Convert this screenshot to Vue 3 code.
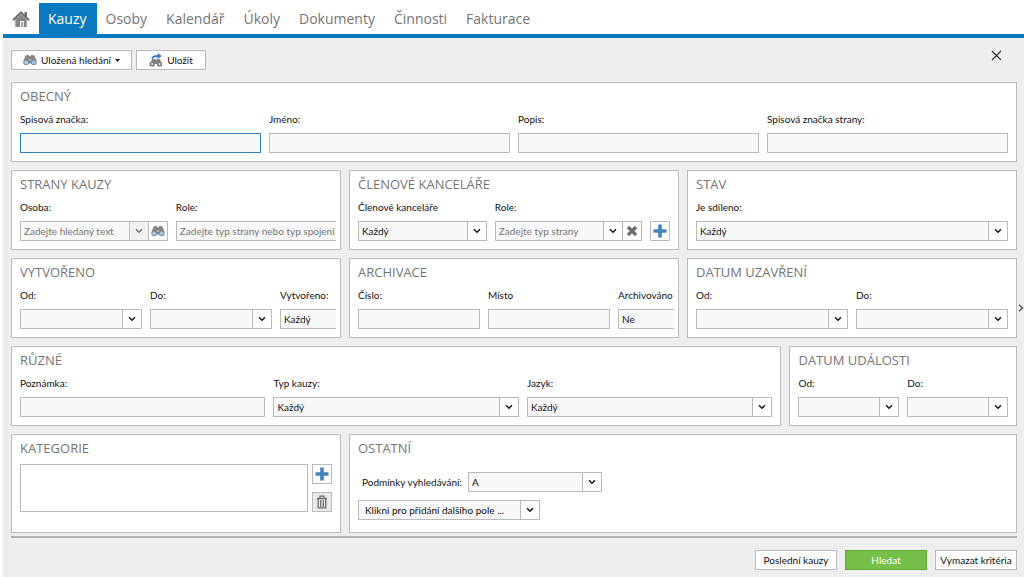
<script setup>
import { ref } from 'vue'

const tabs = ['Kauzy', 'Osoby', 'Kalendář', 'Úkoly', 'Dokumenty', 'Činnosti', 'Fakturace']
const activeTab = ref('Kauzy')

const groups = [
  {
    title: 'Obecný', area: 'general', layout: 'cols-4',
    fields: [
      { id: 'mark', label: 'Spisová značka:', kind: 'text', focused: true },
      { id: 'name', label: 'Jméno:', kind: 'text' },
      { id: 'desc', label: 'Popis:', kind: 'text' },
      { id: 'party-mark', label: 'Spisová značka strany:', kind: 'text' }
    ]
  },
  {
    title: 'Strany kauzy', area: 'parties', layout: 'cols-party',
    fields: [
      { id: 'person', label: 'Osoba:', kind: 'combo', hint: 'Zadejte hledaný text', muted: true, extra: 'find' },
      { id: 'party-role', label: 'Role:', kind: 'text', hint: 'Zadejte typ strany nebo typ spojení', cut: true }
    ]
  },
  {
    title: 'Členové kanceláře', area: 'members', layout: 'cols-member',
    fields: [
      { id: 'member', label: 'Členové kanceláře', kind: 'select', value: 'Každý' },
      { id: 'member-role', label: 'Role:', kind: 'combo', hint: 'Zadejte typ strany', extra: 'clear' }
    ],
    add: true
  },
  {
    title: 'Stav', area: 'state', layout: 'cols-1',
    fields: [{ id: 'shared', label: 'Je sdíleno:', kind: 'select', value: 'Každý' }]
  },
  {
    title: 'Vytvořeno', area: 'created', layout: 'cols-cut',
    fields: [
      { id: 'created-from', label: 'Od:', kind: 'combo' },
      { id: 'created-to', label: 'Do:', kind: 'combo' },
      { id: 'created-by', label: 'Vytvořeno:', kind: 'select', value: 'Každý', cut: true }
    ]
  },
  {
    title: 'Archivace', area: 'archive', layout: 'cols-cut',
    fields: [
      { id: 'number', label: 'Číslo:', kind: 'text' },
      { id: 'place', label: 'Místo', kind: 'text' },
      { id: 'archived', label: 'Archivováno', kind: 'select', value: 'Ne', cut: true }
    ]
  },
  {
    title: 'Datum uzavření', area: 'closed', layout: 'cols-2',
    fields: [
      { id: 'closed-from', label: 'Od:', kind: 'combo' },
      { id: 'closed-to', label: 'Do:', kind: 'combo' }
    ]
  },
  {
    title: 'Různé', area: 'misc', layout: 'cols-3',
    fields: [
      { id: 'note', label: 'Poznámka:', kind: 'text' },
      { id: 'type', label: 'Typ kauzy:', kind: 'select', value: 'Každý' },
      { id: 'lang', label: 'Jazyk:', kind: 'select', value: 'Každý' }
    ]
  },
  {
    title: 'Datum události', area: 'event', layout: 'cols-2',
    fields: [
      { id: 'event-from', label: 'Od:', kind: 'combo' },
      { id: 'event-to', label: 'Do:', kind: 'combo' }
    ]
  }
]
</script>

<template>
  <svg class="defs" aria-hidden="true">
    <symbol id="chevron" viewBox="0 0 8 6"><path d="M1 1.2 4 4.2 7 1.2" fill="none" stroke="currentColor" stroke-width="1.6" /></symbol>
    <symbol id="plus" viewBox="0 0 14 14"><path d="M5.2 .5h3.6v4.7h4.7v3.6H8.8v4.7H5.2V8.8H.5V5.2h4.7z" fill="#4484bd" /></symbol>
    <symbol id="binoculars" viewBox="0 0 14 12">
      <path d="M2.6 1.6 5.4.8l1 1.4h1.2l1-1.4 2.8.8L13.6 7 9 9.500H5L.4 7z" fill="#858585" />
      <circle cx="3.200" cy="8.300" r="2.900" fill="#7a8896" /><circle cx="10.800" cy="8.300" r="2.900" fill="#7a8896" />
      <circle cx="3.200" cy="8.400" r="2" fill="#a3c6e4" /><circle cx="10.800" cy="8.400" r="2" fill="#a3c6e4" />
      <path d="M5.800 5h2.400v2H5.800z" fill="#aeb2b5" />
    </symbol>
  </svg>

  <div class="page">
    <nav class="nav">
      <a class="home" href="#" aria-label="Domů">
        <svg width="18" height="18" viewBox="0 0 18 18">
          <path d="M12.500 2h2.500v5h-2.500z" fill="#6f6f6f" />
          <path d="M3.300 9.500 9 4 14.700 9.500V17H11.800V11H8V17H3.300z" fill="#858585" />
          <path d="M9 12h2v5H9z" fill="#a8a8a8" />
          <path d="M1 10.200 9 2.400 17 10.200" fill="none" stroke="#6c6c6c" stroke-width="2" />
        </svg>
      </a>
      <a v-for="tab in tabs" :key="tab" href="#" class="tab" :class="{ active: tab === activeTab }" @click.prevent="activeTab = tab">{{ tab }}</a>
    </nav>

    <main class="sheet">
      <div class="toolbar">
        <button class="btn saved" type="button">
          <svg width="14" height="12"><use href="#binoculars" /></svg>
          <span>Uložená hledání</span>
          <svg width="5" height="3" viewBox="0 0 5 3"><path d="M0 0h5L2.500 3z" fill="#222" /></svg>
        </button>
        <button class="btn save" type="button">
          <svg width="14" height="14" viewBox="0 0 14 14">
            <path d="M3 6h3l1 1 1-1h3l1.500 5H1.500z" fill="#858585" />
            <circle cx="3.200" cy="11" r="2.600" fill="#747474" /><circle cx="10.500" cy="11" r="2.600" fill="#747474" />
            <circle cx="3.200" cy="11" r="1.200" fill="#d5d5d5" /><circle cx="10.500" cy="11" r="1.200" fill="#d5d5d5" />
            <path d="M3 5.500C4 3.500 6 3 9 3" fill="none" stroke="#3c7fc0" stroke-width="2" /><path d="M8.500 0 13 3 8.500 6z" fill="#3c7fc0" />
          </svg>
          <span>Uložit</span>
        </button>
        <button class="close" type="button" aria-label="Zavřít">
          <svg width="11" height="11" viewBox="0 0 11 11"><path d="M1 1l9 9M10 1l-9 9" stroke="#333" stroke-width="1.200" /></svg>
        </button>
      </div>

      <form class="groups" @submit.prevent>
        <section v-for="g in groups" :key="g.area" class="group" :class="g.area">
          <h2>{{ g.title }}</h2>
          <div class="fields" :class="g.layout">
            <div v-for="f in g.fields" :key="f.id" class="field">
              <label :for="f.id">{{ f.label }}</label>
              <div class="control" :class="{ focused: f.focused, cut: f.cut, muted: f.muted }">
                <div v-if="f.kind === 'select'" class="select">
                  <select :id="f.id"><option>{{ f.value }}</option></select>
                  <span v-if="!f.cut" class="arrow"><svg width="8" height="6"><use href="#chevron" /></svg></span>
                </div>
                <template v-else>
                  <input :id="f.id" type="text" :placeholder="f.hint">
                  <button v-if="f.kind === 'combo'" class="arrow" type="button" aria-label="Rozbalit"><svg width="8" height="6"><use href="#chevron" /></svg></button>
                  <button v-if="f.extra === 'find'" class="arrow find" type="button" aria-label="Hledat osobu"><svg width="14" height="12"><use href="#binoculars" /></svg></button>
                  <button v-if="f.extra === 'clear'" class="arrow clear" type="button" aria-label="Smazat">
                    <svg width="12" height="12" viewBox="0 0 12 12"><path d="M2 2l8 8M10 2l-8 8" stroke="#6e6e6e" stroke-width="3.200" /></svg>
                  </button>
                </template>
              </div>
            </div>
            <button v-if="g.add" class="icon-btn" type="button" aria-label="Přidat"><svg width="14" height="14"><use href="#plus" /></svg></button>
          </div>
        </section>

        <section class="group category">
          <h2>Kategorie</h2>
          <div class="category-row">
            <textarea aria-label="Kategorie"></textarea>
            <div class="stack">
              <button class="icon-btn" type="button" aria-label="Přidat kategorii"><svg width="14" height="14"><use href="#plus" /></svg></button>
              <button class="icon-btn off" type="button" aria-label="Odebrat kategorii">
                <svg width="12" height="14" viewBox="0 0 12 14"><path d="M1 3.500h10M4 3V1.200h4V3M2.200 4v8.800h7.600V4M4.700 5v7M7.300 5v7" fill="none" stroke="#6e6e6e" stroke-width="1.300" /></svg>
              </button>
            </div>
          </div>
        </section>

        <section class="group other">
          <h2>Ostatní</h2>
          <div class="condition">
            <label for="condition">Podmínky vyhledávání:</label>
            <div class="control">
              <div class="select">
                <select id="condition"><option>A</option></select>
                <span class="arrow"><svg width="8" height="6"><use href="#chevron" /></svg></span>
              </div>
            </div>
          </div>
          <div class="control more">
            <div class="select">
              <select aria-label="Další pole"><option>Klikni pro přidání dalšího pole ...</option></select>
              <span class="arrow"><svg width="8" height="6"><use href="#chevron" /></svg></span>
            </div>
          </div>
        </section>
      </form>

      <footer class="actions">
        <button class="btn" type="button">Poslední kauzy</button>
        <button class="btn go" type="button">Hledat</button>
        <button class="btn" type="button">Vymazat kritéria</button>
      </footer>

      <button class="edge" type="button" aria-label="Další">
        <svg width="6" height="8" viewBox="0 0 6 8"><path d="M1 .8 4.500 4 1 7.200" fill="none" stroke="#666" stroke-width="1.600" /></svg>
      </button>
    </main>
  </div>
</template>

<style>
body { background: #fff; }
</style>

<style scoped>
* { box-sizing: border-box; }
.defs { position: absolute; width: 0; height: 0; }
svg { display: block; flex: none; }
.page {
  padding-left: 3px;
  font-family: Lato, "Open Sans", sans-serif;
  font-size: 10px;
  line-height: 16px;
  color: #111;
}
button, input, select, textarea { font: inherit; color: inherit; margin: 0; padding: 0; border-radius: 0; outline: none; }

.nav { display: flex; height: 38px; padding-top: 3px; border-bottom: 4px solid #0b79bf; }
.home { display: flex; align-items: center; justify-content: center; width: 36px; }
.tab { padding: 0 10px 0 9px; font-family: "Open Sans", sans-serif; font-size: 14px; line-height: 32px; color: #757575; text-decoration: none; }
.tab.active { background: #0b79bf; color: #fff; }

.sheet { position: relative; padding: 12px 7px 7px 8px; background: #eee; }
.toolbar { display: flex; gap: 4px; height: 20px; }
.btn { display: flex; align-items: center; justify-content: center; height: 20px; border: 1px solid #bababa; background: #fff; white-space: nowrap; }
.saved { width: 121px; gap: 4px; }
.save { width: 70px; gap: 4px; }
.close { margin: 0 10px 0 auto; align-self: flex-start; padding: 0 5px; height: 10px; border: 0; background: none; }

.groups {
  display: flex;
  flex-wrap: wrap;
  gap: 8px;
  margin-top: 12px;
  padding-bottom: 3px;
  border-bottom: 2px solid #b3b3b3;
}
.group { flex: 1 0 30%; min-width: 0; padding: 4px 8px 8px; border: 1px solid #bdbdbd; background: #fff; }
.general { flex-basis: 100%; }
.misc { flex: 0 0 calc((100% - 8px) * 0.772); }
.event { flex: 1 0 20%; }
.category { flex: 0 0 calc((100% - 16px) / 3); padding-bottom: 20px; }
.other { flex: 1 0 60%; padding-bottom: 12px; }
h2 { margin: 0; font-family: "Open Sans", sans-serif; font-size: 13px; font-weight: 400; line-height: 18px; color: #757575; text-transform: uppercase; white-space: nowrap; }

.fields { display: grid; gap: 8px; margin-top: 6px; align-items: end; }
.cols-1 { grid-template-columns: 1fr; }
.cols-2 { grid-template-columns: repeat(2, minmax(0, 1fr)); }
.cols-3 { grid-template-columns: repeat(3, minmax(0, 1fr)); }
.cols-4 { grid-template-columns: repeat(4, minmax(0, 1fr)); }
.cols-member { grid-template-columns: minmax(0, 7fr) minmax(0, 8fr) 20px; }
.cols-party { grid-template-columns: minmax(0, 12fr) minmax(0, 13fr); margin-right: -4px; }
.cols-cut { grid-template-columns: minmax(0, 1fr) minmax(0, 1fr) 56px; margin-right: -4px; }

.field { min-width: 0; }
label { display: block; white-space: nowrap; }
.field label { margin-bottom: 6px; }
.control { display: flex; height: 20px; border: 1px solid #bababa; background: #f8f8f8; }
.control.focused { border-color: #2f7fc1; }
.control.cut { border-right: 0; }
input, select { flex: 1; width: 100%; min-width: 0; padding: 0 3px; border: 0; background: none; appearance: none; }
.cut input { padding-right: 0; }
input::placeholder { color: #757575; opacity: 1; }
.select { display: grid; flex: 1; min-width: 0; }
.select > * { grid-area: 1 / 1; }
.select .arrow { justify-self: end; pointer-events: none; }
.arrow { display: flex; flex: none; align-items: center; justify-content: center; width: 19px; border: 0; border-left: 1px solid #bababa; background: #fff; color: #1c1c1c; }
.muted .arrow { background: #f1f1f1; color: #777; }
.muted .arrow.find { background: #fff; }
.icon-btn { display: flex; align-items: center; justify-content: center; width: 20px; height: 20px; border: 1px solid #bababa; background: #fff; }
.icon-btn.off { background: #e9e9e9; }

.category-row { display: flex; gap: 4px; margin-top: 7px; }
textarea { flex: 1; height: 48px; border: 1px solid #bababa; background: #fff; resize: none; }
.stack { display: flex; flex-direction: column; justify-content: space-between; }
.condition { display: flex; align-items: center; gap: 6px; margin: 15px 0 8px 4px; }
.condition .control { width: 134px; }
.more { width: 182px; }
.more select { padding-left: 6px; }

.actions { display: flex; justify-content: flex-end; gap: 8px; margin-top: 12px; }
.actions .btn { width: 82px; }
.actions .go { background: #76bf48; border-color: #62a638; color: #fff; }
.edge { position: absolute; right: 0; top: 50%; transform: translateY(-50%); border: 0; background: none; }
</style>
